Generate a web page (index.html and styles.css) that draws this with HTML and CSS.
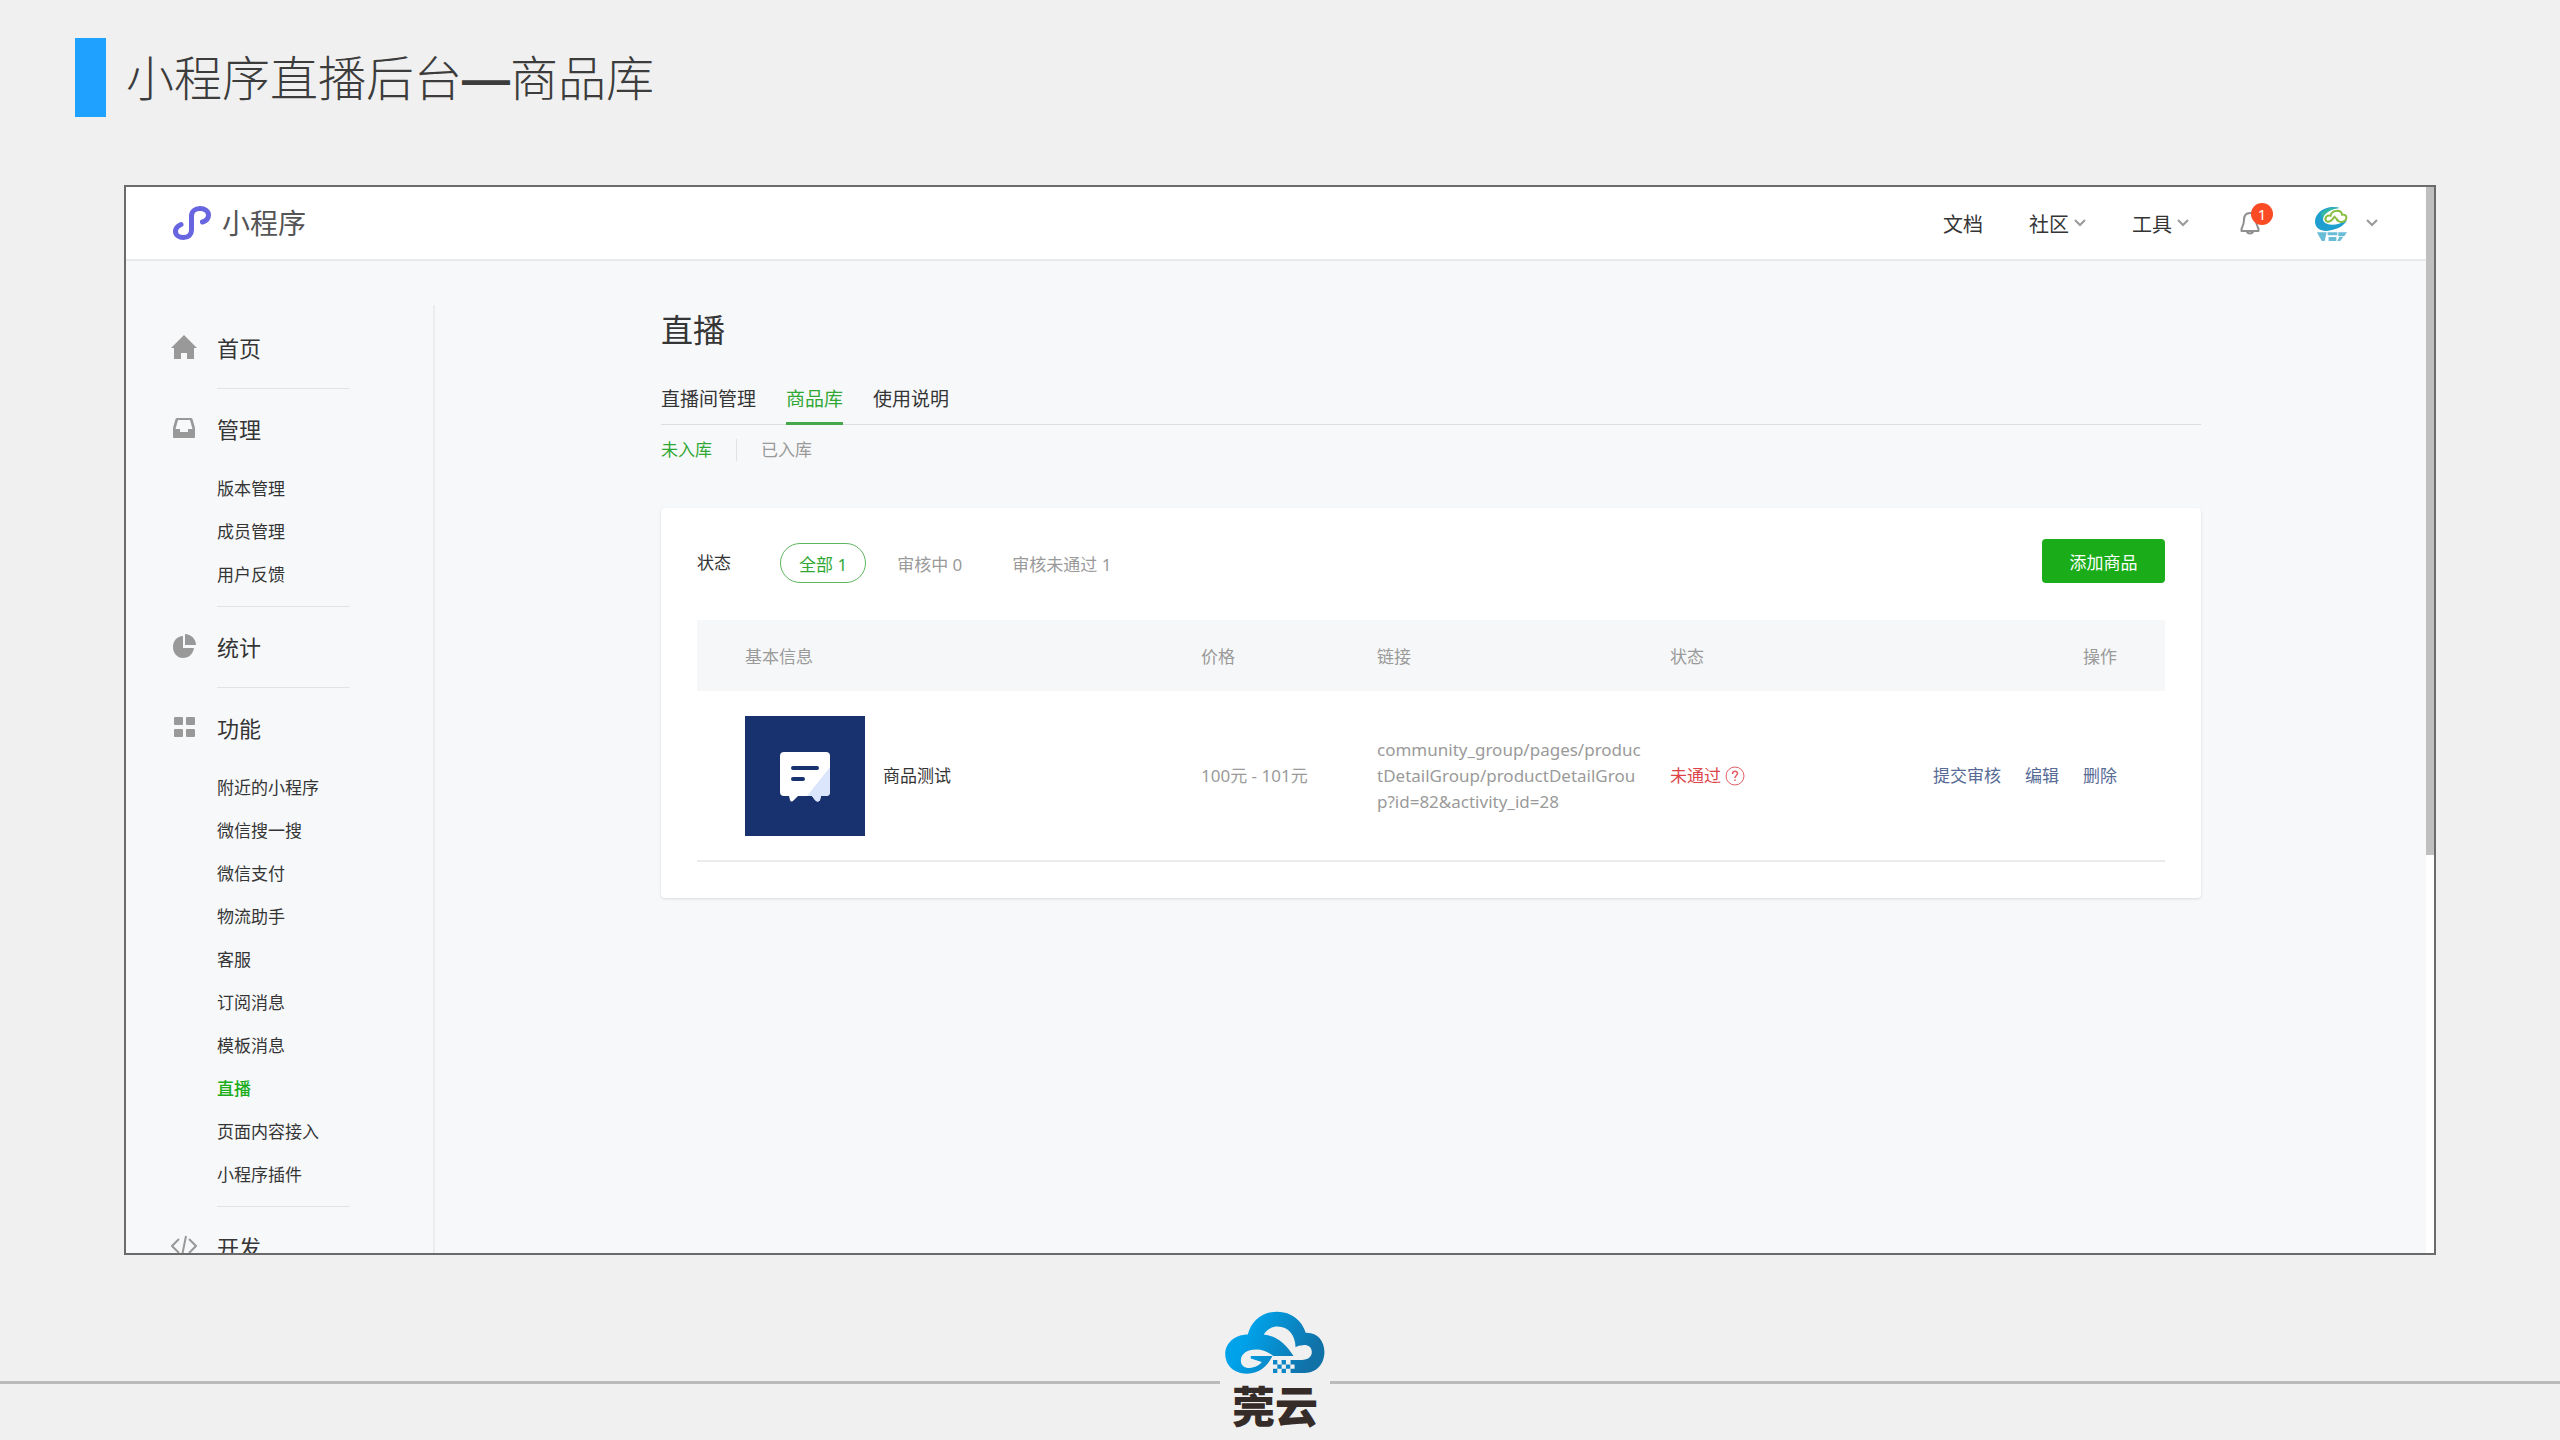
FILE: index.html
```html
<!DOCTYPE html>
<html lang="zh-CN">
<head>
<meta charset="utf-8">
<title>小程序直播后台—商品库</title>
<link rel="stylesheet" href="styles.css">
</head>
<body>
<header class="slide-head">
  <span class="slide-mark"></span>
  <h1 class="slide-title">小程序直播后台<span class="dash">—</span>商品库</h1>
</header>

<div class="frame">
  <div class="app">
    <header class="topbar">
      <a class="brand" href="#">
        <svg class="brand-icon" viewBox="0 0 38 34" fill="none" stroke="#6765e0" stroke-width="5" stroke-linecap="round" aria-hidden="true">
          <path d="M8 18.500C4.500 20 2.500 22.500 2.500 25.500C2.500 29 6 31.500 10.500 31.500C15.500 31.500 18.500 28.500 18.500 24V10C18.500 5.500 22 2.500 27 2.500C31.500 2.500 35.500 5 35.500 9C35.500 12.500 33 15 29.500 16"/>
        </svg>
        <span>小程序</span>
      </a>
      <nav class="topnav">
        <a href="#">文档</a>
        <a href="#">社区<svg class="chev" viewBox="0 0 12 8" aria-hidden="true"><path d="M1 1l5 5 5-5"/></svg></a>
        <a href="#">工具<svg class="chev" viewBox="0 0 12 8" aria-hidden="true"><path d="M1 1l5 5 5-5"/></svg></a>
      </nav>
      <button class="bell" type="button" aria-label="通知">
        <svg viewBox="0 0 20 24" fill="none" stroke="#8f8f8f" stroke-width="2" stroke-linejoin="round" aria-hidden="true">
          <path d="M10 2C6 2 4 5 4 9C4 13 3 15 1.500 18V20H18.500V18C17 15 16 13 16 9C16 5 14 2 10 2ZM7 20.500C7.500 23 12.500 23 13 20.500"/>
        </svg>
        <span class="badge">1</span>
      </button>
      <button class="account" type="button" aria-label="账号">
        <svg class="avatar" viewBox="0 0 36 38" aria-hidden="true">
          <path d="M26 3C14-1 1 7 1 17C1 25 9 28 17 26C24 25 30 22 34 16C25 21 14 22 10 17C7 12 14 4 26 3Z" fill="#1f9fd0"/>
          <path d="M7 9C12 3 20 2 26 3C17 4 10 8 9 15Z" fill="#35b8a0"/>
          <path d="M13 17C10 14 13 10 17 11C18 5 28 4 29 10C34 9 35 15 30 17C28 18 25 17 23 15M13 17C17 18 19 15 21 12L25 16" fill="none" stroke="#85bd3f" stroke-width="2"/>
          <path d="M3 28H13L11 37H8ZM14 28H24V31H14ZM15 33H23V37H15ZM25 28H34L31 32H25ZM26 33H30L27 37H24Z" fill="#69bcd6"/>
        </svg>
        <svg class="chev" viewBox="0 0 12 8" aria-hidden="true"><path d="M1 1l5 5 5-5"/></svg>
      </button>
    </header>

    <div class="body">
      <nav class="sidebar">
        <section class="group">
          <a class="group-title" href="#">
            <svg viewBox="0 0 26 26" fill="#999" aria-hidden="true"><path d="M13 1L26 14H23V25H16V19H10V25H3V14H0Z"/></svg>首页</a>
        </section>
        <section class="group">
          <a class="group-title" href="#">
            <svg viewBox="0 0 26 26" fill="#999" aria-hidden="true"><path fill-rule="evenodd" d="M6 3H20Q21 3 21.500 4L24 13V22Q24 23 23 23H3Q2 23 2 22V13L4.500 4Q5 3 6 3ZM7 5L4.500 14H9V17H17V14H21.500L19 5Z"/></svg>管理</a>
          <ul class="sub">
            <li><a href="#">版本管理</a></li>
            <li><a href="#">成员管理</a></li>
            <li><a href="#">用户反馈</a></li>
          </ul>
        </section>
        <section class="group">
          <a class="group-title" href="#">
            <svg viewBox="0 0 26 26" fill="#999" aria-hidden="true"><path d="M12 3V15H23C22 21 18 25 12 25C6 25 2 20 2 14C2 8 6 3 12 3ZM14 1C20 1 25 6 25 12H14Z"/></svg>统计</a>
        </section>
        <section class="group">
          <a class="group-title" href="#">
            <svg viewBox="0 0 26 26" fill="#999" aria-hidden="true"><rect x="3" y="3" width="9" height="8" rx="1"/><rect x="15" y="3" width="9" height="8" rx="1"/><rect x="3" y="15" width="9" height="8" rx="1"/><rect x="15" y="15" width="9" height="8" rx="1"/></svg>功能</a>
          <ul class="sub">
            <li><a href="#">附近的小程序</a></li>
            <li><a href="#">微信搜一搜</a></li>
            <li><a href="#">微信支付</a></li>
            <li><a href="#">物流助手</a></li>
            <li><a href="#">客服</a></li>
            <li><a href="#">订阅消息</a></li>
            <li><a href="#">模板消息</a></li>
            <li><a class="current" href="#">直播</a></li>
            <li><a href="#">页面内容接入</a></li>
            <li><a href="#">小程序插件</a></li>
          </ul>
        </section>
        <section class="group">
          <a class="group-title" href="#">
            <svg viewBox="0 0 26 26" fill="none" stroke="#999" stroke-width="2" aria-hidden="true"><path d="M8 6L1 13L8 20M18 6L25 13L18 20M15 3L11 23"/></svg>开发</a>
        </section>
      </nav>

      <main class="main">
        <h2 class="page-title">直播</h2>
        <nav class="tabs">
          <a href="#">直播间管理</a>
          <a class="active" href="#">商品库</a>
          <a href="#">使用说明</a>
        </nav>
        <nav class="subtabs">
          <a class="active" href="#">未入库</a>
          <a href="#">已入库</a>
        </nav>

        <section class="card">
          <div class="toolbar">
            <span class="filter-label">状态</span>
            <button class="pill selected" type="button">全部 1</button>
            <button class="pill" type="button">审核中 0</button>
            <button class="pill" type="button">审核未通过 1</button>
            <button class="add" type="button">添加商品</button>
          </div>
          <table class="goods">
            <thead>
              <tr>
                <th class="col-info">基本信息</th>
                <th class="col-price">价格</th>
                <th class="col-link">链接</th>
                <th class="col-status">状态</th>
                <th class="col-actions">操作</th>
              </tr>
            </thead>
            <tbody>
              <tr>
                <td class="col-info">
                  <div class="product">
                    <svg class="thumb" viewBox="0 0 120 120" aria-hidden="true">
                      <rect width="120" height="120" fill="#17326f"/>
                      <path d="M39 36H81Q85 36 85 40V76Q85 80 81 80H76L75 84Q73 87 70 84L67 80H53L49 84Q46 87 45 84L44 80H39Q35 80 35 76V40Q35 36 39 36Z" fill="#fff"/>
                      <path d="M85 51V76Q85 80 81 80H76L75 84Q73 87 70 84L67 80H62Z" fill="#dbe5fb"/>
                      <path d="M48 52H72M48 63H58" stroke="#17326f" stroke-width="4" stroke-linecap="round"/>
                    </svg>
                    <span>商品测试</span>
                  </div>
                </td>
                <td class="col-price">100元 - 101元</td>
                <td class="col-link">community_group/pages/productDetailGroup/productDetailGroup?id=82&amp;activity_id=28</td>
                <td class="col-status">
                  <span class="failed">未通过<svg viewBox="0 0 20 20" fill="none" stroke="#e15f63" aria-hidden="true"><circle cx="10" cy="10" r="9" stroke-width="1"/><path d="M7.500 8C7.500 4.500 12.500 4.500 12.500 7.500C12.500 9.500 10 9.500 10 12M10 13.500V15" stroke-width="1.500"/></svg></span>
                </td>
                <td class="col-actions">
                  <div class="actions"><a href="#">提交审核</a><a href="#">编辑</a><a href="#">删除</a></div>
                </td>
              </tr>
            </tbody>
          </table>
        </section>
      </main>
    </div>
  </div>
  <div class="scroll"><div class="scroll-thumb"></div></div>
</div>

<footer class="slide-foot">
  <div class="logo">
    <svg viewBox="135 62 300 190" aria-hidden="true">
      <defs><linearGradient id="sky" x1="0" y1="0" x2="1" y2="0.300"><stop offset="0.300" stop-color="#00a2ea"/><stop offset="1" stop-color="#1172a8"/></linearGradient></defs>
      <path fill="url(#sky)" d="M200 251C160 251 135 225 135 192C135 158 165 133 203 133C212 95 245 64 292 64C335 64 366 90 378 128C412 126 434 152 434 186C434 222 410 249 375 249H332V236H344V223H332V210H365C385 210 396 200 396 186C396 172 385 164 370 165C360 165 352 168 347 171C346 135 325 109 293 109C275 109 260 118 251 133C290 137 318 162 341 198H280C265 185 248 178 228 178C200 178 182 192 182 211C182 225 192 234 208 234C225 233 238 226 245 216L212 205V198H277C262 228 240 251 200 251Z"/>
      <path fill="#0d87c6" d="M279 210h13v13h-13zM305 210h13v13h-13zM292 223h13v13h-13zM318 223h13v13h-13zM279 236h13v13h-13zM305 236h13v13h-13z"/>
    </svg>
    <span class="logo-name">莞云</span>
  </div>
</footer>
</body>
</html>
```
FILE: styles.css
```css
* { box-sizing: border-box; }

body {
  margin: 0;
  height: 100vh;
  display: flex;
  flex-direction: column;
  background: #f0f0f0;
  color: #353535;
  font-family: "Noto Sans", "Noto Sans CJK SC", sans-serif;
  font-size: 17px;
}

a { color: inherit; text-decoration: none; }

button {
  padding: 0;
  border: 0;
  background: none;
  color: inherit;
  font: inherit;
}

ul { margin: 0; padding: 0; list-style: none; }

/* Slide heading */
.slide-head {
  flex: none;
  display: flex;
  gap: 20px;
  padding: 38px 75px 68px;
}
.slide-mark { width: 31px; height: 79px; background: #1fa1ff; }
.slide-title {
  margin: 0;
  font-family: "Noto Sans CJK SC", sans-serif;
  font-size: 48px;
  font-weight: 300;
  line-height: 74px;
  color: #3c3c3c;
}
.dash { font-family: "Liberation Sans", sans-serif; font-weight: 700; }

/* Console window */
.frame {
  flex: 1;
  min-height: 0;
  display: flex;
  margin: 0 124px;
  border: 2px solid #6b6b6b;
  background: #f7f8fa;
}
.app { flex: 1; min-width: 0; display: flex; flex-direction: column; }
.scroll { flex: none; width: 8px; background: #fff; }
.scroll-thumb { height: 668px; max-height: 100%; background: #bfbfbf; }

.topbar {
  flex: none;
  display: flex;
  align-items: center;
  height: 74px;
  padding: 0 48px 0 47px;
  background: #fff;
  border-bottom: 2px solid #e9eaeb;
}
.brand {
  display: flex;
  align-items: center;
  gap: 11px;
  margin-right: auto;
  font-size: 28px;
  line-height: 40px;
  color: #555;
}
.brand-icon { width: 38px; height: 34px; }
.topnav { display: flex; gap: 46px; font-size: 20px; }
.topnav a { display: flex; align-items: center; gap: 5px; }
.chev { width: 12px; height: 8px; fill: none; stroke: #999; stroke-width: 2; }
.bell { position: relative; width: 20px; height: 24px; margin-left: 51px; }
.bell svg { display: block; width: 20px; height: 24px; }
.badge {
  position: absolute;
  left: 11px;
  top: -8px;
  width: 22px;
  height: 22px;
  border-radius: 50%;
  background: #fa4b24;
  color: #fff;
  font-size: 15px;
  line-height: 22px;
  text-align: center;
}
.account { display: flex; align-items: center; gap: 17px; margin-left: 54px; }
.avatar { width: 35px; height: 37px; }

.body { flex: 1; min-height: 0; display: flex; }

/* Side menu */
.sidebar {
  flex: none;
  width: 309px;
  margin-top: 44px;
  padding: 3px 0 0 45px;
  border-right: 2px solid #ebecee;
  overflow: hidden;
}
.group { padding-bottom: 2px; }
.group + .group::before {
  content: "";
  display: block;
  width: 133px;
  margin-left: 46px;
  border-top: 1px solid #e2e3e5;
}
.group-title {
  display: flex;
  align-items: center;
  gap: 20px;
  height: 78px;
  font-size: 22px;
}
.group-title svg { width: 26px; height: 26px; }
.sub { padding-bottom: 8px; }
.sub a { display: block; padding-left: 46px; line-height: 43px; }
.sub .current { color: #1aad19; font-weight: 500; }

/* Main column */
.main { flex: 1; min-width: 0; padding: 45px 225px 0 226px; }
.page-title { margin: 0; font-size: 32px; font-weight: 400; line-height: 48px; }
.tabs {
  display: flex;
  gap: 30px;
  margin-top: 20px;
  border-bottom: 1px solid #dcdee1;
  font-size: 19px;
  line-height: 50px;
}
.tabs a { height: 51px; margin-bottom: -1px; }
.tabs .active { color: #31a835; border-bottom: 3px solid #46a84a; }
.subtabs { display: flex; margin-top: 14px; line-height: 22px; }
.subtabs a { color: #9a9a9a; }
.subtabs .active { color: #31a835; }
.subtabs a + a { margin-left: 24px; padding-left: 24px; border-left: 1px solid #e1e2e4; }

.card {
  margin-top: 47px;
  padding: 31px 36px 36px;
  border-radius: 4px;
  background: #fff;
  box-shadow: 0 1px 3px rgba(0, 0, 0, 0.12);
}
.toolbar { display: flex; align-items: flex-end; height: 44px; margin-bottom: 37px; }
.filter-label { margin-right: 49px; line-height: 40px; }
.pill {
  height: 40px;
  margin-right: 12px;
  padding: 0 18px;
  border: 1px solid transparent;
  border-radius: 20px;
  color: #9a9a9a;
}
.pill.selected { border-color: #5db661; color: #31a835; }
.add {
  width: 123px;
  height: 44px;
  margin-left: auto;
  border-radius: 4px;
  background: #1aad19;
  color: #fff;
}

.goods { width: 100%; border-collapse: collapse; table-layout: fixed; }
.goods th {
  height: 71px;
  padding: 0;
  background: #f6f7f8;
  color: #9a9a9a;
  font-weight: 400;
  text-align: left;
}
.goods td {
  height: 170px;
  padding: 0;
  border-bottom: 2px solid #ebebec;
  color: #9a9a9a;
  line-height: 26px;
}
.goods .col-info { padding-left: 48px; }
.goods .col-price { width: 176px; }
.goods .col-link { width: 293px; padding-right: 26px; word-break: break-all; }
.goods .col-status { width: 200px; }
.goods .col-actions { width: 295px; padding-right: 48px; text-align: right; }
.product { display: flex; align-items: center; gap: 18px; color: #353535; }
.thumb { width: 120px; height: 120px; }
.failed { display: flex; align-items: center; gap: 4px; color: #dc4448; }
.failed svg { width: 20px; height: 20px; }
.actions { display: flex; justify-content: flex-end; gap: 24px; color: #576b95; }

/* Slide footer */
.slide-foot {
  flex: none;
  display: flex;
  align-items: flex-start;
  gap: 5px;
  height: 185px;
  padding-top: 56px;
}
.slide-foot::before,
.slide-foot::after {
  content: "";
  flex: 1;
  margin-top: 70px;
  border-top: 3px solid #bbb;
}
.slide-foot::after { flex-basis: 10px; }
.logo { display: flex; flex-direction: column; align-items: center; width: 100px; }
.logo svg { width: 100px; height: 63px; }
.logo-name {
  margin-top: 8px;
  font-family: "Noto Sans CJK SC", sans-serif;
  font-size: 43px;
  font-weight: 900;
  line-height: 44px;
  color: #352b29;
}
```
